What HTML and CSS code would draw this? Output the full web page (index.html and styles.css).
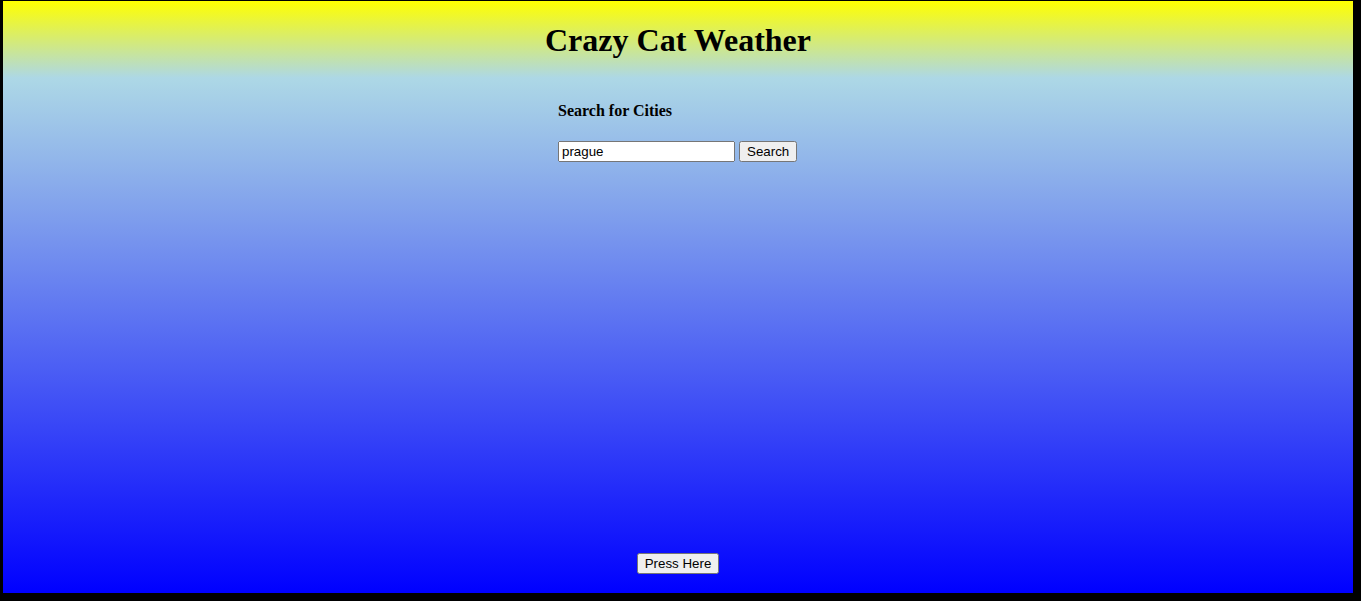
FILE: index.html
```html
<!DOCTYPE html>
<html>
<head>
<meta charset="utf-8">
<title>Crazy Cat Weather</title>
<link rel="stylesheet" href="styles.css">
</head>
<body>
<div class="panel">
  <h1 class="title">Crazy Cat Weather</h1>
  <div class="search">
    <h4 class="search-title">Search for Cities</h4>
    <div class="search-row">
      <input class="search-input" type="text" value="prague">
      <button class="search-btn">Search</button>
    </div>
  </div>
  <div class="footer">
    <button class="press-btn">Press Here</button>
  </div>
</div>
</body>
</html>
```

FILE: styles.css
```css
html, body {
  margin: 0;
  padding: 0;
  background: #000;
  height: 100%;
}
body {
  padding: 1px 8px 8px 3px;
  box-sizing: border-box;
}
.panel {
  height: 592px;
  width: 1350px;
  background: linear-gradient(to bottom, #ffff00 0%, #add8e6 13%, #0000ff 100%);
  display: flex;
  flex-direction: column;
  align-items: center;
  font-family: "Liberation Serif", "Times New Roman", serif;
  color: #000;
}
.title {
  margin: 21px 0 0 0;
  font-size: 32px;
  font-weight: bold;
  line-height: 37px;
}
.search {
  width: 240px;
  margin-top: 43px;
}
.search-title {
  margin: 0;
  font-size: 16px;
  font-weight: bold;
  line-height: 18px;
}
.search-row {
  margin-top: 21px;
  display: flex;
  gap: 4px;
}
.search-input,
.search-btn,
.press-btn {
  font-family: "Liberation Sans", Arial, sans-serif;
  font-size: 13.333px;
}
.search-input {
  width: 169px;
}
.footer {
  margin-top: auto;
  padding-bottom: 19px;
}
```
